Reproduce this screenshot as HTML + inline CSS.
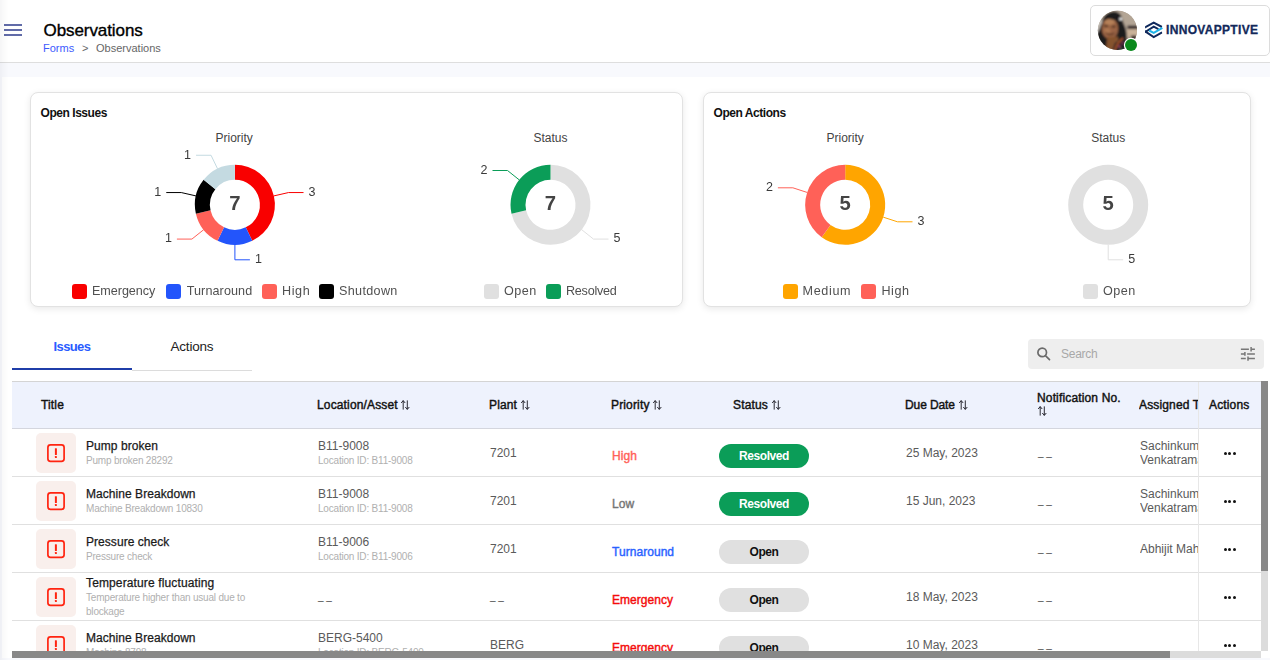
<!DOCTYPE html>
<html lang="en">
<head>
<meta charset="utf-8">
<title>Observations</title>
<style>
*{box-sizing:border-box;margin:0;padding:0}
html,body{width:1270px;height:660px;overflow:hidden}
body{position:relative;background:#f8f9fd;font-family:"Liberation Sans",sans-serif;color:#222;font-size:12px}
.abs{position:absolute}
.med{-webkit-text-stroke:0.3px currentColor}
/* header */
#hdr{position:absolute;left:0;top:0;width:1270px;height:63px;background:#fff;border-bottom:1px solid #dedede}
#burger{position:absolute;left:4px;top:24px;width:18px;height:12px}
#burger i{position:absolute;left:0;width:18px;height:2px;background:#616ba8}
#ttl{position:absolute;left:43.5px;top:21px;letter-spacing:-0.08px;font-size:17px;line-height:20px;color:#000;white-space:nowrap;-webkit-text-stroke:0.35px #000}
#crumb{position:absolute;left:43px;top:41px;font-size:11px;line-height:14px;color:#666;white-space:nowrap}
#crumb a{color:#3d5afe;text-decoration:none}
#crumb span{position:absolute;top:0}
#userbox{position:absolute;left:1090px;top:5px;width:180px;height:51px;border:1px solid #dcdcdc;border-radius:5px;background:#fff}
#brand{position:absolute;left:1166px;top:23px;font-size:12px;line-height:14px;font-weight:bold;color:#12295a;letter-spacing:0.32px;-webkit-text-stroke:0.3px #12295a;white-space:nowrap}
/* content */
#content{position:absolute;left:2px;top:77px;width:1268px;height:581px;background:#fff}
.card{position:absolute;top:92px;height:215px;background:#fff;border:1px solid #e2e2e2;border-radius:8px;box-shadow:0 2px 7px rgba(0,0,0,0.09)}
.ctitle{margin-top:0.5px;position:absolute;font-size:12px;line-height:14px;font-weight:bold;color:#111;letter-spacing:-0.45px;white-space:nowrap}
.dtitle{position:absolute;width:100px;text-align:center;font-size:12px;line-height:14px;color:#444;white-space:nowrap}
.lg{will-change:transform;position:absolute;top:284px;height:15px;white-space:nowrap;font-size:12.6px;line-height:15px;color:#505050}
.lg b{position:absolute;left:0;top:0;width:15px;height:15px;border-radius:3px}
.lg span{position:absolute;left:20px;top:0}
svg text{font-family:"Liberation Sans",sans-serif}
/* tabs */
.tab{position:absolute;top:340px;height:16px;line-height:16px;white-space:nowrap}
/* search */
#search{position:absolute;left:1028px;top:339px;width:236px;height:30px;background:#eeeeee;border-radius:4px}
#search span{position:absolute;left:33px;top:8px;font-size:12px;line-height:14px;color:#a8a8a8;letter-spacing:-0.25px}
/* table */
#thead{position:absolute;left:12px;top:381px;width:1249px;height:48px;background:#eef2fd;border-top:1px solid #d4d4d4;border-bottom:1px solid #d4d6de}
.th{position:absolute;font-size:12px;line-height:14px;color:#111;white-space:nowrap;-webkit-text-stroke:0.42px #111;letter-spacing:0.15px}
.th .sa{margin-left:3.6px;vertical-align:-1px}
.row{position:absolute;left:12px;width:1249px;height:48px;border-bottom:1px solid #e0e0e0;background:#fff}
.ico{position:absolute;left:24px;top:4px;width:40px;height:40px;border-radius:5px;background:#f9efec}
.t1{position:absolute;left:74px;font-size:12px;line-height:14px;color:#1a1a1a;white-space:nowrap;-webkit-text-stroke:0.25px #1a1a1a;letter-spacing:0.05px}
.t2{position:absolute;left:74px;font-size:10px;line-height:14px;color:#b0b0b0;white-space:nowrap;letter-spacing:-0.2px}
.c{position:absolute;font-size:12px;line-height:14px;color:#5a5a5a;white-space:nowrap}
.dd{font-size:10px !important;margin-top:-0.5px;color:#444 !important}
.pr{position:absolute;left:600px;font-size:12px;line-height:14px;white-space:nowrap;-webkit-text-stroke:0.4px currentColor;letter-spacing:0.05px}
.bdg{position:absolute;left:707px;top:15px;width:90px;height:24px;border-radius:12px;text-align:center;font-size:12px;line-height:24px;font-weight:bold;letter-spacing:-0.45px}
.bdg.res{background:#0b9d58;color:#fff}
.bdg.opn{background:#e0e0e0;color:#111}
#actcol{position:absolute;left:1198px;top:382px;width:63px;height:269px;border-left:1px solid #e7e7e7;background:transparent}
.dots{position:absolute;left:1223.7px;width:13px;height:3px}
.dots i{position:absolute;top:0;width:3px;height:3px;border-radius:50%;background:#111}
</style>
</head>
<body>
<div id="hdr">
  <div id="burger"><i style="top:0"></i><i style="top:5px"></i><i style="top:10px"></i></div>
  <div id="ttl">Observations</div>
  <div id="crumb"><a href="#">Forms</a><span style="left:39px">&gt;</span><span style="left:53px">Observations</span></div>
  <div id="userbox"></div>
  <svg class="abs" style="left:1097px;top:10px" width="42" height="42" viewBox="0 0 42 42">
    <defs><clipPath id="av"><circle cx="20.4" cy="20.4" r="19.6"/></clipPath>
    <filter id="bl" x="-20%" y="-20%" width="140%" height="140%"><feGaussianBlur stdDeviation="0.85"/></filter></defs>
    <g clip-path="url(#av)">
      <rect x="0" y="0" width="42" height="42" fill="#a89a8c"/>
      <g filter="url(#bl)">
        <rect x="-2" y="-2" width="46" height="46" fill="#ab9d8e"/>
        <path d="M20 -2 L44 -2 L44 17 L27 17 Z" fill="#b3a595"/>
        <rect x="-2" y="10" width="9" height="14" fill="#c9c2ba"/>
        <rect x="30.5" y="15.6" width="13" height="3.6" fill="#33262a"/>
        <rect x="30" y="19.2" width="14" height="7.6" fill="#c9b198"/>
        <rect x="34" y="25.5" width="6" height="4" fill="#3a2c2c"/>
        <rect x="29" y="29" width="14" height="14" fill="#8a7868"/>
        <path d="M5 13 C6 5 12 1.5 17 1.6 C23 1.6 25.5 7 26 12 C28.5 17 30.5 23 29.5 30 L29 44 L-2 44 L-2 26 C0 24 2.5 20 3.5 16 Z" fill="#1d1a1c"/>
        <ellipse cx="13" cy="18.4" rx="8.2" ry="10.8" fill="#9a6444"/>
        <ellipse cx="12.5" cy="11.5" rx="5.2" ry="3.6" fill="#b58058"/>
        <ellipse cx="10.2" cy="21" rx="3.2" ry="3" fill="#ad7751"/>
        <path d="M5 13 C7 6.5 13 4.6 19 6.2 C21.5 8.5 22 12 21.6 15 C19.5 10.5 16 8.4 11 9 C8.4 9.6 6.4 11.2 5 14 Z" fill="#1d1a1c"/>
        <ellipse cx="9" cy="15.8" rx="2.3" ry="0.9" fill="#3b2417"/>
        <ellipse cx="16.6" cy="16.6" rx="2.1" ry="0.9" fill="#3b2417"/>
        <path d="M8.4 22.6 C11 25.4 15 25.4 17.6 23 C15 24.6 11 24.6 8.4 22.6 Z" fill="#4d2b1c" stroke="#4d2b1c" stroke-width="0.7"/>
        <path d="M10.5 27 L21 26.5 L23 44 L8 44 Z" fill="#85522f"/>
        <path d="M-2 44 L-2 27 C2 30 7 34 11 44 Z" fill="#1d1a1c"/>
        <path d="M18 33 L25 28.4 L31 32 L33 44 L14 44 Z" fill="#262125"/>
        <path d="M26 28.2 C22 31 19.5 35 18 40" fill="none" stroke="#d0642c" stroke-width="1.3"/>
        <circle cx="22.4" cy="36.4" r="0.9" fill="#e2508c"/>
        <circle cx="25.4" cy="33" r="0.8" fill="#e2508c"/>
        <circle cx="24" cy="39" r="0.7" fill="#58b070"/>
        <circle cx="23.7" cy="9" r="1.5" fill="#ffffff"/>
      </g>
    </g>
    <circle cx="34" cy="35" r="7.2" fill="#fff"/>
    <circle cx="34" cy="35" r="6" fill="#0a8a1c"/>
  </svg>
  <svg class="abs" style="left:1144px;top:20px" width="20" height="20" viewBox="0 0 20 20" fill="none" stroke-linejoin="miter">
    <defs><clipPath id="lg"><rect x="1.1" y="0" width="17.3" height="20"/></clipPath></defs>
    <g clip-path="url(#lg)" stroke="#10295c" stroke-width="2">
      <path d="M-0.5 8.3 L9.7 2.6 L18 7"/>
      <path d="M14.4 9.1 L9.7 6.7 L-0.5 13"/>
      <path d="M-0.5 10.3 L9.7 17 L18.1 12.3"/>
    </g>
    <path d="M5.2 10.5 L9.7 12.8 L18.4 7.8" stroke="#1eb4e9" stroke-width="2"/>
  </svg>
  <div id="brand">INNOVAPPTIVE</div>
</div>

<div id="content"></div>

<!-- CARDS -->
<div class="card" style="left:30px;width:653px"></div>
<div class="card" style="left:703px;width:548px"></div>
<div class="ctitle" style="left:40.5px;top:105px">Open Issues</div>
<div class="ctitle" style="left:713.5px;top:105px">Open Actions</div>

<div class="dtitle" style="left:184.2px;top:131px">Priority</div>
<div class="dtitle" style="left:500.5px;top:131px">Status</div>
<div class="dtitle" style="left:795.2px;top:131px">Priority</div>
<div class="dtitle" style="left:1058.2px;top:131px">Status</div>

<svg class="abs" id="charts" style="left:0;top:92px;will-change:transform" width="1270" height="215" viewBox="0 92 1270 215">
<path d="M234.9 164.8 A40 40 0 0 1 252.26 240.84 L245.75 227.32 A25 25 0 0 0 234.9 179.8 Z" fill="#f90000"/>
<polyline points="273.9,195.9 288.52,192.56 303.52,192.56" fill="none" stroke="#f90000" stroke-width="1"/>
<text x="308.52" y="195.86" font-size="12.5" fill="#3a3a3a" text-anchor="start">3</text>
<path d="M252.26 240.84 A40 40 0 0 1 217.54 240.84 L224.05 227.32 A25 25 0 0 0 245.75 227.32 Z" fill="#2355fb"/>
<polyline points="234.9,244.8 234.9,259.8 249.9,259.8" fill="none" stroke="#2355fb" stroke-width="1"/>
<text x="254.9" y="263.1" font-size="12.5" fill="#3a3a3a" text-anchor="start">1</text>
<path d="M217.54 240.84 A40 40 0 0 1 195.9 213.7 L210.53 210.36 A25 25 0 0 0 224.05 227.32 Z" fill="#ff6158"/>
<polyline points="203.63,229.74 191.9,239.09 176.9,239.09" fill="none" stroke="#ff6158" stroke-width="1"/>
<text x="171.9" y="242.39" font-size="12.5" fill="#3a3a3a" text-anchor="end">1</text>
<path d="M195.9 213.7 A40 40 0 0 1 203.63 179.86 L215.35 189.21 A25 25 0 0 0 210.53 210.36 Z" fill="#000000"/>
<polyline points="195.9,195.9 181.28,192.56 166.28,192.56" fill="none" stroke="#000000" stroke-width="1"/>
<text x="161.28" y="195.86" font-size="12.5" fill="#3a3a3a" text-anchor="end">1</text>
<path d="M203.63 179.86 A40 40 0 0 1 234.9 164.8 L234.9 179.8 A25 25 0 0 0 215.35 189.21 Z" fill="#c4dae1"/>
<polyline points="217.54,168.76 211.04,155.25 196.04,155.25" fill="none" stroke="#c4dae1" stroke-width="1"/>
<text x="191.04" y="158.55" font-size="12.5" fill="#3a3a3a" text-anchor="end">1</text>
<text x="234.9" y="210.1" font-size="20.3" font-weight="bold" fill="#444" text-anchor="middle">7</text>
<path d="M550.5 164.8 A40 40 0 1 1 511.5 213.7 L526.13 210.36 A25 25 0 1 0 550.5 179.8 Z" fill="#e0e0e0"/>
<polyline points="581.77,229.74 593.5,239.09 608.5,239.09" fill="none" stroke="#e0e0e0" stroke-width="1"/>
<text x="613.5" y="242.39" font-size="12.5" fill="#3a3a3a" text-anchor="start">5</text>
<path d="M511.5 213.7 A40 40 0 0 1 550.5 164.8 L550.5 179.8 A25 25 0 0 0 526.13 210.36 Z" fill="#0b9d58"/>
<polyline points="519.23,179.86 507.5,170.51 492.5,170.51" fill="none" stroke="#0b9d58" stroke-width="1"/>
<text x="487.5" y="173.81" font-size="12.5" fill="#3a3a3a" text-anchor="end">2</text>
<text x="550.5" y="210.1" font-size="20.3" font-weight="bold" fill="#444" text-anchor="middle">7</text>
<path d="M845.2 164.8 A40 40 0 1 1 821.69 237.16 L830.51 225.03 A25 25 0 1 0 845.2 179.8 Z" fill="#ffa500"/>
<polyline points="883.24,217.16 897.51,221.8 912.51,221.8" fill="none" stroke="#ffa500" stroke-width="1"/>
<text x="917.51" y="225.1" font-size="12.5" fill="#3a3a3a" text-anchor="start">3</text>
<path d="M821.69 237.16 A40 40 0 0 1 845.2 164.8 L845.2 179.8 A25 25 0 0 0 830.51 225.03 Z" fill="#ff6158"/>
<polyline points="807.16,192.44 792.89,187.8 777.89,187.8" fill="none" stroke="#ff6158" stroke-width="1"/>
<text x="772.89" y="191.1" font-size="12.5" fill="#3a3a3a" text-anchor="end">2</text>
<text x="845.2" y="210.1" font-size="20.3" font-weight="bold" fill="#444" text-anchor="middle">5</text>
<path d="M1108.2 164.8 A40 40 0 1 1 1108.19 164.8 Z M1108.2 179.8 A25 25 0 1 0 1108.21 179.8 Z" fill="#e0e0e0" fill-rule="evenodd"/>
<polyline points="1108.2,244.8 1108.2,259.8 1123.2,259.8" fill="none" stroke="#e0e0e0" stroke-width="1"/>
<text x="1128.2" y="263.1" font-size="12.5" fill="#3a3a3a" text-anchor="start">5</text>
<text x="1108.2" y="210.1" font-size="20.3" font-weight="bold" fill="#444" text-anchor="middle">5</text>
</svg>

<!-- legends -->
<div class="lg" style="left:72.3px"><b style="background:#f90000"></b><span style="letter-spacing:-0.05px">Emergency</span></div>
<div class="lg" style="left:165.8px"><b style="background:#2355fb"></b><span style="left:20.7px;letter-spacing:0.1px">Turnaround</span></div>
<div class="lg" style="left:261.9px"><b style="background:#ff6158"></b><span style="letter-spacing:0.6px">High</span></div>
<div class="lg" style="left:319.4px"><b style="background:#000"></b><span style="letter-spacing:0.33px">Shutdown</span></div>
<div class="lg" style="left:484px"><b style="background:#e0e0e0"></b><span style="letter-spacing:0.5px">Open</span></div>
<div class="lg" style="left:545.6px"><b style="background:#0b9d58"></b><span style="letter-spacing:-0.25px">Resolved</span></div>
<div class="lg" style="left:782.9px"><b style="background:#ffa500"></b><span style="left:19.5px;letter-spacing:0.65px">Medium</span></div>
<div class="lg" style="left:860.8px"><b style="background:#ff6158"></b><span style="left:20.5px;letter-spacing:0.5px">High</span></div>
<div class="lg" style="left:1082.8px"><b style="background:#e0e0e0"></b><span style="letter-spacing:0.45px">Open</span></div>

<!-- TABS -->
<div class="tab" style="left:53.5px;top:339px;font-size:13px;font-weight:bold;color:#2a5cff;letter-spacing:-0.6px">Issues</div>
<div class="tab" style="left:170.5px;top:339px;font-size:13.5px;color:#222;letter-spacing:-0.2px">Actions</div>
<div class="abs" style="left:132px;top:370px;width:120px;height:1px;background:#dcdcdc"></div>
<div class="abs" style="left:12px;top:368px;width:120px;height:2px;background:#1f3ea9"></div>

<div id="search">
  <svg class="abs" style="left:8px;top:7px" width="16" height="16" viewBox="0 0 16 16" fill="none" stroke="#6a6a6a" stroke-width="1.7"><circle cx="6.2" cy="6.4" r="4.3"/><path d="M9.4 9.7 L13.5 13.7" stroke-linecap="round"/></svg>
  <span>Search</span>
  <svg class="abs" style="left:212px;top:8px" width="16" height="15" viewBox="0 0 16 15" fill="none" stroke="#777" stroke-width="1.5">
    <path d="M0.9 2.3H8.9M11.1 2.3H14.9M0.9 6.9H4.9M7.1 6.9H14.9M0.9 11.5H5.8M8 11.5H14.9"/>
    <path d="M11.1 0.1V4.5M4.9 5.1V8.8M8 9.4V13.7"/>
  </svg>
</div>

<!-- TABLE -->
<div id="thead">
  <div class="th" style="left:29px;top:16px">Title</div>
  <div class="th" style="left:305px;top:16px">Location/Asset<svg class="sa" width="9" height="10" viewBox="0 0 9 10"><path d="M2.2 0.6V9.6M0.2 3L2.2 0.6L4.2 3M6.3 0.4V9.4M4.3 7L6.3 9.4L8.3 7" fill="none" stroke="#2a2a33" stroke-width="1"/></svg></div>
  <div class="th" style="left:477px;top:16px">Plant<svg class="sa" width="9" height="10" viewBox="0 0 9 10"><path d="M2.2 0.6V9.6M0.2 3L2.2 0.6L4.2 3M6.3 0.4V9.4M4.3 7L6.3 9.4L8.3 7" fill="none" stroke="#2a2a33" stroke-width="1"/></svg></div>
  <div class="th" style="left:599px;top:16px">Priority<svg class="sa" width="9" height="10" viewBox="0 0 9 10"><path d="M2.2 0.6V9.6M0.2 3L2.2 0.6L4.2 3M6.3 0.4V9.4M4.3 7L6.3 9.4L8.3 7" fill="none" stroke="#2a2a33" stroke-width="1"/></svg></div>
  <div class="th" style="left:721px;top:16px">Status<svg class="sa" width="9" height="10" viewBox="0 0 9 10"><path d="M2.2 0.6V9.6M0.2 3L2.2 0.6L4.2 3M6.3 0.4V9.4M4.3 7L6.3 9.4L8.3 7" fill="none" stroke="#2a2a33" stroke-width="1"/></svg></div>
  <div class="th" style="left:893px;top:16px;letter-spacing:-0.1px">Due Date<svg class="sa" width="9" height="10" viewBox="0 0 9 10"><path d="M2.2 0.6V9.6M0.2 3L2.2 0.6L4.2 3M6.3 0.4V9.4M4.3 7L6.3 9.4L8.3 7" fill="none" stroke="#2a2a33" stroke-width="1"/></svg></div>
  <div class="th" style="left:1025px;top:9px">Notification No.<br><svg class="sa" style="margin-left:0.5px;vertical-align:0px" width="9" height="10" viewBox="0 0 9 10"><path d="M2.2 0.6V9.6M0.2 3L2.2 0.6L4.2 3M6.3 0.4V9.4M4.3 7L6.3 9.4L8.3 7" fill="none" stroke="#2a2a33" stroke-width="1"/></svg></div>
  <div class="th" style="left:1127px;top:16px;width:59px;overflow:hidden">Assigned To</div>
  <div class="th" style="left:1197px;top:16px">Actions</div>
</div>

<div class="row" style="top:429px">
<div class="ico"><svg class="abs" style="left:10px;top:10px" width="20" height="20" viewBox="0 0 20 20"><rect x="1.9" y="1.9" width="16.2" height="16.5" rx="2.6" fill="none" stroke="#ff2410" stroke-width="1.7"/><rect x="8.9" y="5.2" width="2" height="6.8" rx="0.5" fill="#ff2410"/><rect x="8.9" y="13.1" width="2" height="1.9" rx="0.4" fill="#ff2410"/></svg></div>
<div class="t1" style="top:10px">Pump broken</div>
<div class="t2" style="top:25px">Pump broken 28292</div>
<div class="c" style="left:306px;top:10px">B11-9008</div>
<div class="t2" style="left:306px;top:25px">Location ID: B11-9008</div>
<div class="c" style="left:478px;top:17px">7201</div>
<div class="pr" style="top:20px;color:#ff6158">High</div>
<div class="bdg res">Resolved</div>
<div class="c" style="left:894px;top:17px">25 May, 2023</div>
<div class="c dd" style="left:1026px;top:17px">_ _</div>
<div class="c" style="left:1128px;top:10px;width:58px;overflow:hidden;line-height:14px;white-space:normal;height:28px">Sachinkumar<br>Venkatraman</div>
</div>
<div class="dots" style="top:452.1px"><i style="left:0"></i><i style="left:4.8px"></i><i style="left:9.6px"></i></div>
<div class="row" style="top:477px">
<div class="ico"><svg class="abs" style="left:10px;top:10px" width="20" height="20" viewBox="0 0 20 20"><rect x="1.9" y="1.9" width="16.2" height="16.5" rx="2.6" fill="none" stroke="#ff2410" stroke-width="1.7"/><rect x="8.9" y="5.2" width="2" height="6.8" rx="0.5" fill="#ff2410"/><rect x="8.9" y="13.1" width="2" height="1.9" rx="0.4" fill="#ff2410"/></svg></div>
<div class="t1" style="top:10px">Machine Breakdown</div>
<div class="t2" style="top:25px">Machine Breakdown 10830</div>
<div class="c" style="left:306px;top:10px">B11-9008</div>
<div class="t2" style="left:306px;top:25px">Location ID: B11-9008</div>
<div class="c" style="left:478px;top:17px">7201</div>
<div class="pr" style="top:20px;color:#757575">Low</div>
<div class="bdg res">Resolved</div>
<div class="c" style="left:894px;top:17px">15 Jun, 2023</div>
<div class="c dd" style="left:1026px;top:17px">_ _</div>
<div class="c" style="left:1128px;top:10px;width:58px;overflow:hidden;line-height:14px;white-space:normal;height:28px">Sachinkumar<br>Venkatraman</div>
</div>
<div class="dots" style="top:500.1px"><i style="left:0"></i><i style="left:4.8px"></i><i style="left:9.6px"></i></div>
<div class="row" style="top:525px">
<div class="ico"><svg class="abs" style="left:10px;top:10px" width="20" height="20" viewBox="0 0 20 20"><rect x="1.9" y="1.9" width="16.2" height="16.5" rx="2.6" fill="none" stroke="#ff2410" stroke-width="1.7"/><rect x="8.9" y="5.2" width="2" height="6.8" rx="0.5" fill="#ff2410"/><rect x="8.9" y="13.1" width="2" height="1.9" rx="0.4" fill="#ff2410"/></svg></div>
<div class="t1" style="top:10px">Pressure check</div>
<div class="t2" style="top:25px">Pressure check</div>
<div class="c" style="left:306px;top:10px">B11-9006</div>
<div class="t2" style="left:306px;top:25px">Location ID: B11-9006</div>
<div class="c" style="left:478px;top:17px">7201</div>
<div class="pr" style="top:20px;color:#2962ff">Turnaround</div>
<div class="bdg opn">Open</div>
<div class="c dd" style="left:1026px;top:17px">_ _</div>
<div class="c" style="left:1128px;top:17px;width:58px;overflow:hidden">Abhijit Mahajan</div>
</div>
<div class="dots" style="top:548.1px"><i style="left:0"></i><i style="left:4.8px"></i><i style="left:9.6px"></i></div>
<div class="row" style="top:573px">
<div class="ico"><svg class="abs" style="left:10px;top:10px" width="20" height="20" viewBox="0 0 20 20"><rect x="1.9" y="1.9" width="16.2" height="16.5" rx="2.6" fill="none" stroke="#ff2410" stroke-width="1.7"/><rect x="8.9" y="5.2" width="2" height="6.8" rx="0.5" fill="#ff2410"/><rect x="8.9" y="13.1" width="2" height="1.9" rx="0.4" fill="#ff2410"/></svg></div>
<div class="t1" style="top:3px;letter-spacing:0.13px">Temperature fluctuating</div>
<div class="t2" style="top:18px">Temperature higher than usual due to</div>
<div class="t2" style="top:32px">blockage</div>
<div class="c dd" style="left:306px;top:17px">_ _</div>
<div class="c dd" style="left:478px;top:17px">_ _</div>
<div class="pr" style="top:20px;color:#f40c0c">Emergency</div>
<div class="bdg opn">Open</div>
<div class="c" style="left:894px;top:17px">18 May, 2023</div>
<div class="c dd" style="left:1026px;top:17px">_ _</div>
</div>
<div class="dots" style="top:596.1px"><i style="left:0"></i><i style="left:4.8px"></i><i style="left:9.6px"></i></div>
<div class="row" style="top:621px">
<div class="ico"><svg class="abs" style="left:10px;top:10px" width="20" height="20" viewBox="0 0 20 20"><rect x="1.9" y="1.9" width="16.2" height="16.5" rx="2.6" fill="none" stroke="#ff2410" stroke-width="1.7"/><rect x="8.9" y="5.2" width="2" height="6.8" rx="0.5" fill="#ff2410"/><rect x="8.9" y="13.1" width="2" height="1.9" rx="0.4" fill="#ff2410"/></svg></div>
<div class="t1" style="top:10px">Machine Breakdown</div>
<div class="t2" style="top:25px">Machine 8798</div>
<div class="c" style="left:306px;top:10px">BERG-5400</div>
<div class="t2" style="left:306px;top:25px">Location ID: BERG-5400</div>
<div class="c" style="left:478px;top:17px">BERG</div>
<div class="pr" style="top:20px;color:#f40c0c">Emergency</div>
<div class="bdg opn">Open</div>
<div class="c" style="left:894px;top:17px">10 May, 2023</div>
<div class="c dd" style="left:1026px;top:17px">_ _</div>
</div>
<div class="dots" style="top:644.1px"><i style="left:0"></i><i style="left:4.8px"></i><i style="left:9.6px"></i></div>
<div id="actcol"></div>

<!-- scrollbars -->
<div class="abs" style="left:1261px;top:381px;width:7px;height:270px;background:#dcdcdc"></div>
<div class="abs" style="left:1261px;top:381px;width:7px;height:190px;background:#888"></div>
<div class="abs" style="left:12px;top:651px;width:1249px;height:7px;background:#dcdcdc"></div>
<div class="abs" style="left:12px;top:651px;width:1158px;height:7px;background:#888"></div>
<div class="abs" style="left:0;top:658px;width:1270px;height:2px;background:#f8f9fd"></div>
<div class="abs" style="left:0;top:0;width:9px;height:660px;background:linear-gradient(to right,rgba(0,0,30,0.04),rgba(0,0,0,0.012) 5px,rgba(0,0,0,0))"></div>
</body>
</html>
